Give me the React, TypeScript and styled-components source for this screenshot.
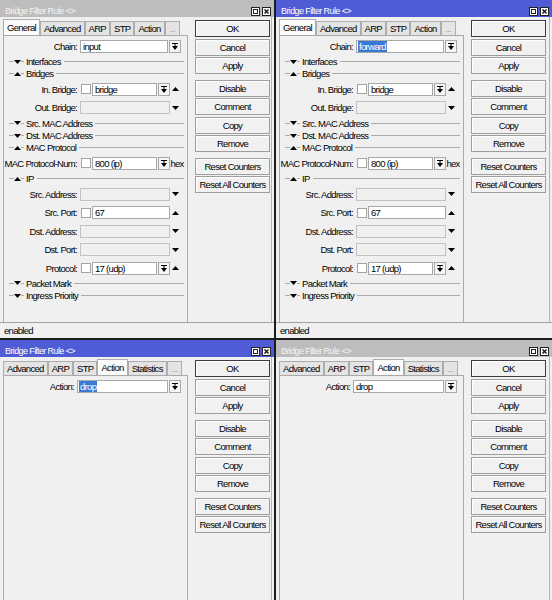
import styled, { createGlobalStyle } from "styled-components";

const GlobalStyle = createGlobalStyle`
  html, body {
    margin: 0;
    padding: 0;
    background: #1c1c1c;
  }
  body {
    font-family: "Liberation Sans", Arial, sans-serif;
    font-size: 9.5px;
    letter-spacing: -0.7px;
    color: #000;
  }
`;

const Desktop = styled.div`
  width: 552px;
  height: 600px;
  display: grid;
  grid-template-columns: 274px 276px;
  grid-template-rows: 338px 260px;
  gap: 2px;
  background: #1c1c1c;
  overflow: hidden;
`;

const Window = styled.div`
  display: flex;
  flex-direction: column;
  background: #f0f0f0;
  overflow: hidden;
  min-height: 0;
`;

const TitleBar = styled.div<{ $active?: boolean }>`
  height: 17px;
  flex-shrink: 0;
  box-sizing: border-box;
  padding: 5px 3px 0 5px;
  display: flex;
  align-items: center;
  justify-content: space-between;
  font-size: 9px;
  letter-spacing: -0.6px;
  background: ${(p) => (p.$active ? "#4f5cd6" : "#bdbdbd")};
  color: ${(p) => (p.$active ? "#ffffff" : "#f4f4f4")};
`;

const WinControls = styled.div`
  display: flex;
  gap: 2px;
`;

const Main = styled.div`
  flex: 1;
  min-height: 0;
  display: flex;
  padding-left: 3px;
  margin-right: 2px;
  border-right: 1px solid #b4b4b4;
`;

const LeftCol = styled.div`
  width: 185px;
  flex-shrink: 0;
  display: flex;
  flex-direction: column;
`;

const TabStrip = styled.div`
  height: 18px;
  flex-shrink: 0;
  display: flex;
  align-items: flex-end;
`;

const Tab = styled.div<{ $selected?: boolean; $muted?: boolean }>`
  height: ${(p) => (p.$selected ? 16 : 14)}px;
  min-width: 15px;
  box-sizing: border-box;
  padding: 0 3px;
  display: flex;
  align-items: center;
  justify-content: center;
  border: 1px solid #adadad;
  border-bottom: none;
  background: ${(p) => (p.$selected ? "#fbfbfb" : "#e4e4e4")};
  color: ${(p) => (p.$muted ? "#a0a0a0" : "#000")};
  white-space: nowrap;
`;

const Panel = styled.div`
  flex: 1;
  min-height: 0;
  box-sizing: border-box;
  border: 1px solid #a9a9a9;
  border-bottom: none;
  padding-top: 1px;
`;

const ButtonCol = styled.div`
  width: 75px;
  flex-shrink: 0;
  margin-left: 7px;
  padding-top: 3px;
  display: flex;
  flex-direction: column;
`;

const Button = styled.div<{ $default?: boolean; $group?: boolean }>`
  height: 17px;
  flex-shrink: 0;
  box-sizing: border-box;
  margin-bottom: 1.5px;
  margin-top: ${(p) => (p.$group ? 4 : 0)}px;
  display: flex;
  align-items: center;
  justify-content: center;
  background: #f1f1f1;
  border: 1px solid ${(p) => (p.$default ? "#3c3c3c" : "#9e9e9e")};
  box-shadow: inset 1px 1px #ffffff;
  white-space: nowrap;
`;

const StatusBar = styled.div`
  height: 16px;
  flex-shrink: 0;
  box-sizing: border-box;
  border-top: 1px solid #a0a0a0;
  padding-left: 4px;
  display: flex;
  align-items: center;
`;

const FieldRow = styled.div`
  height: 18.5px;
  display: flex;
  align-items: center;
  padding-right: 6px;
`;

const Label = styled.div<{ $w: number }>`
  width: ${(p) => p.$w}px;
  flex-shrink: 0;
  box-sizing: border-box;
  padding-right: 3px;
  text-align: right;
  white-space: nowrap;
`;

const Controls = styled.div`
  flex: 1;
  min-width: 0;
  display: flex;
  align-items: center;
`;

const Check = styled.div`
  width: 10px;
  height: 10px;
  flex-shrink: 0;
  box-sizing: border-box;
  margin: 0 1px 0 1px;
  background: #fff;
  border: 1px solid #a3a3a3;
`;

const Input = styled.div<{ $disabled?: boolean }>`
  flex: 1;
  min-width: 0;
  height: 13px;
  box-sizing: border-box;
  padding-left: 2px;
  display: flex;
  align-items: center;
  background: ${(p) => (p.$disabled ? "#f0f0f0" : "#fff")};
  border: 1px solid ${(p) => (p.$disabled ? "#c2c2c2" : "#a8a8a8")};
  white-space: nowrap;
  overflow: hidden;
`;

const Selected = styled.span`
  background: #3a78d8;
  color: #fff;
  padding: 0 1px;
  margin-left: -1px;
`;

const DropBtn = styled.div`
  width: 12px;
  height: 13px;
  flex-shrink: 0;
  box-sizing: border-box;
  margin-left: 1px;
  display: flex;
  align-items: center;
  justify-content: center;
  background: #f6f6f6;
  border: 1px solid #a8a8a8;
`;

const Side = styled.div`
  width: 11px;
  flex-shrink: 0;
  display: flex;
  align-items: center;
  justify-content: center;
  overflow: visible;
  white-space: nowrap;
`;

const Suffix = styled.span`
  margin-left: 3px;
`;

const Header = styled.div`
  height: 12.3px;
  display: flex;
  align-items: center;
  padding: 0 3px 0 5px;
`;

const Rule = styled.div<{ $w?: number }>`
  height: 1px;
  background: #ababab;
  flex: ${(p) => (p.$w ? `0 0 ${p.$w}px` : "1")};
`;

const HeaderText = styled.span`
  margin: 0 3px 0 2px;
  white-space: nowrap;
`;

const Tri = ({ dir }: { dir: "up" | "down" }) => (
  <svg width="7" height="4" viewBox="0 0 7 4" style={{ display: "block", flexShrink: 0 }}>
    <polygon points={dir === "down" ? "0,0 7,0 3.5,4" : "0,4 7,4 3.5,0"} fill="#000" />
  </svg>
);

const DropIcon = () => (
  <svg width="6" height="7" viewBox="0 0 6 7" style={{ display: "block" }}>
    <rect x="0" y="0" width="6" height="1" fill="#000" />
    <rect x="2.5" y="1" width="1" height="2" fill="#000" />
    <polygon points="0,3 6,3 3,7" fill="#000" />
  </svg>
);

const MaxIcon = () => (
  <svg width="9" height="9" viewBox="0 0 9 9" style={{ display: "block" }}>
    <rect x="0.5" y="0.5" width="8" height="8" fill="#fff" stroke="#222" />
    <rect x="2.5" y="2.5" width="4" height="4" fill="none" stroke="#222" />
    <rect x="2" y="2" width="5" height="1" fill="#222" />
  </svg>
);

const CloseIcon = () => (
  <svg width="9" height="9" viewBox="0 0 9 9" style={{ display: "block" }}>
    <rect x="0.5" y="0.5" width="8" height="8" fill="#fff" stroke="#222" />
    <path d="M2.5 2.5 L6.5 6.5 M6.5 2.5 L2.5 6.5" stroke="#111" strokeWidth="1.4" />
  </svg>
);

type Row =
  | { kind: "header"; title: string; open?: boolean }
  | {
      kind: "field";
      label: string;
      value?: string;
      check?: boolean;
      combo?: boolean;
      disabled?: boolean;
      arrow?: "up" | "down";
      suffix?: string;
      selected?: boolean;
    };

const generalRows = (chain: string, selected: boolean): Row[] => [
  { kind: "field", label: "Chain:", value: chain, combo: true, selected },
  { kind: "header", title: "Interfaces" },
  { kind: "header", title: "Bridges", open: true },
  { kind: "field", label: "In. Bridge:", check: true, value: "bridge", combo: true, arrow: "up" },
  { kind: "field", label: "Out. Bridge:", disabled: true, arrow: "down" },
  { kind: "header", title: "Src. MAC Address" },
  { kind: "header", title: "Dst. MAC Address" },
  { kind: "header", title: "MAC Protocol", open: true },
  { kind: "field", label: "MAC Protocol-Num:", check: true, value: "800 (ip)", combo: true, suffix: "hex" },
  { kind: "header", title: "IP", open: true },
  { kind: "field", label: "Src. Address:", disabled: true, arrow: "down" },
  { kind: "field", label: "Src. Port:", check: true, value: "67", arrow: "up" },
  { kind: "field", label: "Dst. Address:", disabled: true, arrow: "down" },
  { kind: "field", label: "Dst. Port:", disabled: true, arrow: "down" },
  { kind: "field", label: "Protocol:", check: true, value: "17 (udp)", combo: true, arrow: "up" },
  { kind: "header", title: "Packet Mark" },
  { kind: "header", title: "Ingress Priority" },
];

const actionRows = (selected: boolean): Row[] => [
  { kind: "field", label: "Action:", value: "drop", combo: true, selected },
];

function Rows({ rows, labelWidth }: { rows: Row[]; labelWidth: number }) {
  return (
    <>
      {rows.map((row) =>
        row.kind === "header" ? (
          <Header key={row.title}>
            <Rule $w={5} />
            <Tri dir={row.open ? "up" : "down"} />
            <Rule $w={3} />
            <HeaderText>{row.title}</HeaderText>
            <Rule />
          </Header>
        ) : (
          <FieldRow key={row.label}>
            <Label $w={labelWidth}>{row.label}</Label>
            <Controls>
              {row.check && <Check />}
              <Input $disabled={row.disabled}>
                {row.value && (row.selected ? <Selected>{row.value}</Selected> : row.value)}
              </Input>
              {row.combo && (
                <DropBtn>
                  <DropIcon />
                </DropBtn>
              )}
            </Controls>
            {(row.arrow || row.suffix) && (
              <Side>
                {row.arrow && <Tri dir={row.arrow} />}
                {row.suffix && <Suffix>{row.suffix}</Suffix>}
              </Side>
            )}
          </FieldRow>
        )
      )}
    </>
  );
}

const buttons: { text: string; group?: boolean; def?: boolean }[] = [
  { text: "OK", def: true },
  { text: "Cancel" },
  { text: "Apply" },
  { text: "Disable", group: true },
  { text: "Comment" },
  { text: "Copy" },
  { text: "Remove" },
  { text: "Reset Counters", group: true },
  { text: "Reset All Counters" },
];

function RuleWindow({
  active,
  tabs,
  current,
  status,
  rows,
  labelWidth,
}: {
  active?: boolean;
  tabs: string[];
  current: string;
  status?: string;
  rows: Row[];
  labelWidth: number;
}) {
  return (
    <Window>
      <TitleBar $active={active}>
        <span>Bridge Filter Rule &lt;&gt;</span>
        <WinControls>
          <MaxIcon />
          <CloseIcon />
        </WinControls>
      </TitleBar>
      <Main>
        <LeftCol>
          <TabStrip>
            {tabs.map((t) => (
              <Tab key={t} $selected={t === current} $muted={t === "..."}>
                {t}
              </Tab>
            ))}
          </TabStrip>
          <Panel>
            <Rows rows={rows} labelWidth={labelWidth} />
          </Panel>
        </LeftCol>
        <ButtonCol>
          {buttons.map((b) => (
            <Button key={b.text} $default={b.def} $group={b.group}>
              {b.text}
            </Button>
          ))}
        </ButtonCol>
      </Main>
      {status && <StatusBar>{status}</StatusBar>}
    </Window>
  );
}

const topTabs = ["General", "Advanced", "ARP", "STP", "Action", "..."];
const bottomTabs = ["Advanced", "ARP", "STP", "Action", "Statistics", "..."];

export default function App() {
  return (
    <>
      <GlobalStyle />
      <Desktop>
        <RuleWindow
          tabs={topTabs}
          current="General"
          status="enabled"
          rows={generalRows("input", false)}
          labelWidth={76}
        />
        <RuleWindow
          active
          tabs={topTabs}
          current="General"
          status="enabled"
          rows={generalRows("forward", true)}
          labelWidth={76}
        />
        <RuleWindow
          active
          tabs={bottomTabs}
          current="Action"
          rows={actionRows(true)}
          labelWidth={73}
        />
        <RuleWindow
          tabs={bottomTabs}
          current="Action"
          rows={actionRows(false)}
          labelWidth={73}
        />
      </Desktop>
    </>
  );
}
